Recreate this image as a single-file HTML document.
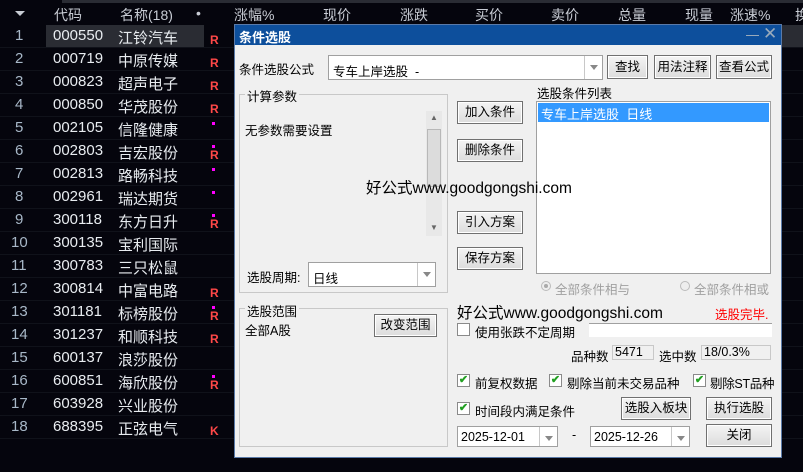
<!DOCTYPE html>
<html><head><meta charset="utf-8"><style>
*{margin:0;padding:0;box-sizing:border-box}
body{width:803px;height:472px;background:#05050d;position:relative;overflow:hidden;font-family:"Liberation Sans","Noto Sans CJK SC",sans-serif}
.a{position:absolute;white-space:nowrap}
.h{color:#c8ccd4;font-size:14px;top:5px}
.r{position:absolute;left:0;width:803px;height:23px;font-size:15px;color:#e8ecf0;border-bottom:1px solid #10121a}
.r span{position:absolute;top:2px}
.n{color:#a8b8c8}
.R{color:#ff4848;font-weight:bold;font-size:12px;left:210px;top:8px!important}
.d{position:absolute;left:212px;top:5px;width:3px;height:3px;background:#ff00ff}
.dl{position:absolute;left:234px;top:24px;width:548px;height:434px;background:#f0f0f0;border:1px solid #5a7aa8}
.t{font-size:12.5px;color:#000}
.btn{position:absolute;background:linear-gradient(#f4f4f4,#dcdcdc);border:1px solid #707070;box-shadow:inset 0 0 0 1px #fff;font-size:12.5px;text-align:center;color:#000}
.box{position:absolute;background:#fff;border:1px solid #a0a0a0}
.grp{position:absolute;border:1px solid #c8c8c8}
.cb{position:absolute;width:13px;height:13px;border:1px solid #8a8a8a;background:#fff;color:#22a022;font-size:11px;line-height:11px;text-align:center;font-weight:bold}
.dd{position:absolute;right:0;top:0;bottom:0;width:18px;border-left:1px solid #c8c8c8}
.dd:after{content:"";position:absolute;left:5px;top:9px;border:4px solid transparent;border-top:5px solid #888}
</style></head><body>
<div class="a" style="left:62px;top:0;width:741px;height:3px;background:#2a2c34"></div>
<div class="a" style="left:0;top:3px;width:803px;height:21px;background:#05050d"></div>
<div class="a" style="left:15px;top:11px;border:5px solid transparent;border-top:5px solid #c8ccd4"></div>
<div class="a h" style="left:54px">代码</div>
<div class="a h" style="left:120px">名称(18)</div>
<div class="a h" style="left:196px">•</div>
<div class="a h" style="left:234px">涨幅%</div>
<div class="a h" style="left:323px">现价</div>
<div class="a h" style="left:400px">涨跌</div>
<div class="a h" style="left:475px">买价</div>
<div class="a h" style="left:551px">卖价</div>
<div class="a h" style="left:618px">总量</div>
<div class="a h" style="left:685px">现量</div>
<div class="a h" style="left:730px">涨速%</div>
<div class="a h" style="left:795px">换</div>
<div class="a" style="left:46px;top:25px;width:158px;height:23px;background:#2a2c33"></div>
<div class="a" style="left:782px;top:25px;width:21px;height:23px;background:#2a2c33"></div>
<div class="r" style="top:25px"><span class="n" style="left:15px">1</span><span style="left:53px">000550</span><span style="left:118px">江铃汽车</span><span class="R">R</span></div>
<div class="r" style="top:48px"><span class="n" style="left:15px">2</span><span style="left:53px">000719</span><span style="left:118px">中原传媒</span><span class="R">R</span></div>
<div class="r" style="top:71px"><span class="n" style="left:15px">3</span><span style="left:53px">000823</span><span style="left:118px">超声电子</span><span class="R">R</span></div>
<div class="r" style="top:94px"><span class="n" style="left:15px">4</span><span style="left:53px">000850</span><span style="left:118px">华茂股份</span><span class="R">R</span></div>
<div class="r" style="top:117px"><span class="n" style="left:15px">5</span><span style="left:53px">002105</span><span style="left:118px">信隆健康</span><i class="d"></i></div>
<div class="r" style="top:140px"><span class="n" style="left:15px">6</span><span style="left:53px">002803</span><span style="left:118px">吉宏股份</span><i class="d"></i><span class="R">R</span></div>
<div class="r" style="top:163px"><span class="n" style="left:15px">7</span><span style="left:53px">002813</span><span style="left:118px">路畅科技</span><i class="d"></i></div>
<div class="r" style="top:186px"><span class="n" style="left:15px">8</span><span style="left:53px">002961</span><span style="left:118px">瑞达期货</span><i class="d"></i></div>
<div class="r" style="top:209px"><span class="n" style="left:15px">9</span><span style="left:53px">300118</span><span style="left:118px">东方日升</span><i class="d"></i><span class="R">R</span></div>
<div class="r" style="top:232px"><span class="n" style="left:11px">10</span><span style="left:53px">300135</span><span style="left:118px">宝利国际</span></div>
<div class="r" style="top:255px"><span class="n" style="left:11px">11</span><span style="left:53px">300783</span><span style="left:118px">三只松鼠</span></div>
<div class="r" style="top:278px"><span class="n" style="left:11px">12</span><span style="left:53px">300814</span><span style="left:118px">中富电路</span><span class="R">R</span></div>
<div class="r" style="top:301px"><span class="n" style="left:11px">13</span><span style="left:53px">301181</span><span style="left:118px">标榜股份</span><i class="d"></i><span class="R">R</span></div>
<div class="r" style="top:324px"><span class="n" style="left:11px">14</span><span style="left:53px">301237</span><span style="left:118px">和顺科技</span><span class="R">R</span></div>
<div class="r" style="top:347px"><span class="n" style="left:11px">15</span><span style="left:53px">600137</span><span style="left:118px">浪莎股份</span></div>
<div class="r" style="top:370px"><span class="n" style="left:11px">16</span><span style="left:53px">600851</span><span style="left:118px">海欣股份</span><i class="d"></i><span class="R">R</span></div>
<div class="r" style="top:393px"><span class="n" style="left:11px">17</span><span style="left:53px">603928</span><span style="left:118px">兴业股份</span></div>
<div class="r" style="top:416px"><span class="n" style="left:11px">18</span><span style="left:53px">688395</span><span style="left:118px">正弦电气</span><span class="R">K</span></div>

<div class="dl">
<div class="a" style="left:0;top:0;width:546px;height:20px;background:#0d4f9c"></div>
<div class="a" style="left:4px;top:2px;color:#fff;font-size:13px;font-weight:bold">条件选股</div>
<div class="a" style="left:511px;top:10px;width:13px;height:1px;background:#9ab"></div>
<div class="a" style="left:528px;top:-1px;color:#9ab;font-size:17px">✕</div>
<div class="a t" style="left:4px;top:34px">条件选股公式</div>
<div class="box" style="left:93px;top:30px;width:275px;height:25px"><span class="a t" style="left:4px;top:5px">专车上岸选股&nbsp;&nbsp;-</span><div class="dd"></div></div>
<div class="btn" style="left:372px;top:30px;width:41px;height:24px;line-height:22px">查找</div>
<div class="btn" style="left:419px;top:30px;width:57px;height:24px;line-height:22px">用法注释</div>
<div class="btn" style="left:481px;top:30px;width:56px;height:24px;line-height:22px">查看公式</div>
<div class="grp" style="left:4px;top:69px;width:209px;height:199px"></div>
<div class="a t" style="left:10px;top:61px;background:#f0f0f0;padding:0 2px">计算参数</div>
<div class="a t" style="left:10px;top:95px">无参数需要设置</div>
<div class="a" style="left:191px;top:86px;width:16px;height:125px;background:#e8e8e8"><div class="a" style="left:1px;top:18px;width:14px;height:58px;background:#dcdcdc;border:1px solid #b8b8b8"></div><div class="a" style="left:4px;top:2px;font-size:8px;color:#666">▲</div><div class="a" style="left:4px;top:112px;font-size:8px;color:#666">▼</div></div>
<div class="btn" style="left:222px;top:76px;width:66px;height:23px;line-height:21px">加入条件</div>
<div class="btn" style="left:222px;top:114px;width:66px;height:23px;line-height:21px">删除条件</div>
<div class="btn" style="left:222px;top:186px;width:66px;height:23px;line-height:21px">引入方案</div>
<div class="btn" style="left:222px;top:222px;width:66px;height:23px;line-height:21px">保存方案</div>
<div class="a t" style="left:302px;top:58px">选股条件列表</div>
<div class="box" style="left:301px;top:76px;width:235px;height:173px"><div class="a" style="left:1px;top:1px;width:231px;height:19px;background:#3399ff;color:#fff;font-size:13px;padding:1px 3px">专车上岸选股&nbsp;&nbsp;日线</div></div>
<div class="a" style="left:131px;top:151px;font-size:15.5px;color:#000">好公式www.goodgongshi.com</div>
<div class="a t" style="left:12px;top:242px">选股周期:</div>
<div class="box" style="left:73px;top:237px;width:128px;height:25px"><span class="a t" style="left:4px;top:5px">日线</span><div class="dd"></div></div>
<div class="a" style="left:306px;top:256px;width:10px;height:10px;border-radius:50%;border:1px solid #bbb;background:#eee"><i style="position:absolute;left:2px;top:2px;width:4px;height:4px;border-radius:50%;background:#aaa"></i></div>
<div class="a t" style="left:320px;top:254px;color:#a0a0a0">全部条件相与</div>
<div class="a" style="left:445px;top:256px;width:10px;height:10px;border-radius:50%;border:1px solid #bbb;background:#eee"></div>
<div class="a t" style="left:459px;top:254px;color:#a0a0a0">全部条件相或</div>
<div class="grp" style="left:4px;top:283px;width:209px;height:139px"></div>
<div class="a t" style="left:10px;top:276px;background:#f0f0f0;padding:0 2px">选股范围</div>
<div class="a t" style="left:10px;top:295px">全部A股</div>
<div class="btn" style="left:139px;top:289px;width:63px;height:23px;line-height:21px">改变范围</div>
<div class="a" style="left:222px;top:280px;font-size:15.5px;line-height:18px;color:#000">好公式www.goodgongshi.com</div>
<div class="a t" style="left:480px;top:279px;color:#ff0000">选股完毕.</div>
<div class="cb" style="left:222px;top:298px"></div>
<div class="a t" style="left:240px;top:297px">使用张跌不定周期</div>
<div class="box" style="left:354px;top:298px;width:183px;height:14px;border:none;border-top:1px solid #a0a0a0"></div>
<div class="a t" style="left:336px;top:321px">品种数</div>
<div class="a t" style="left:377px;top:320px;width:42px;height:15px;border:1px solid #c8c8c8;line-height:13px;padding-left:2px">5471</div>
<div class="a t" style="left:424px;top:321px">选中数</div>
<div class="a t" style="left:466px;top:320px;width:70px;height:15px;border:1px solid #c8c8c8;line-height:13px;padding-left:2px">18/0.3%</div>
<div class="cb" style="left:222px;top:349px">✔</div><div class="a t" style="left:240px;top:348px">前复权数据</div>
<div class="cb" style="left:314px;top:349px">✔</div><div class="a t" style="left:332px;top:348px">剔除当前未交易品种</div>
<div class="cb" style="left:458px;top:349px">✔</div><div class="a t" style="left:475px;top:348px;letter-spacing:-0.3px">剔除ST品种</div>
<div class="cb" style="left:222px;top:377px">✔</div><div class="a t" style="left:240px;top:376px">时间段内满足条件</div>
<div class="btn" style="left:386px;top:372px;width:70px;height:23px;line-height:21px">选股入板块</div>
<div class="btn" style="left:471px;top:372px;width:66px;height:23px;line-height:21px">执行选股</div>
<div class="box" style="left:222px;top:401px;width:101px;height:21px"><span class="a" style="left:3px;top:3px;font-family:'Liberation Sans',sans-serif;font-size:12.5px">2025-12-01</span><div class="dd" style="width:18px"></div></div>
<div class="a t" style="left:337px;top:403px">-</div>
<div class="box" style="left:355px;top:401px;width:100px;height:21px"><span class="a" style="left:3px;top:3px;font-family:'Liberation Sans',sans-serif;font-size:12.5px">2025-12-26</span><div class="dd" style="width:18px"></div></div>
<div class="btn" style="left:471px;top:399px;width:66px;height:23px;line-height:21px">关闭</div>
</div>
</body></html>
